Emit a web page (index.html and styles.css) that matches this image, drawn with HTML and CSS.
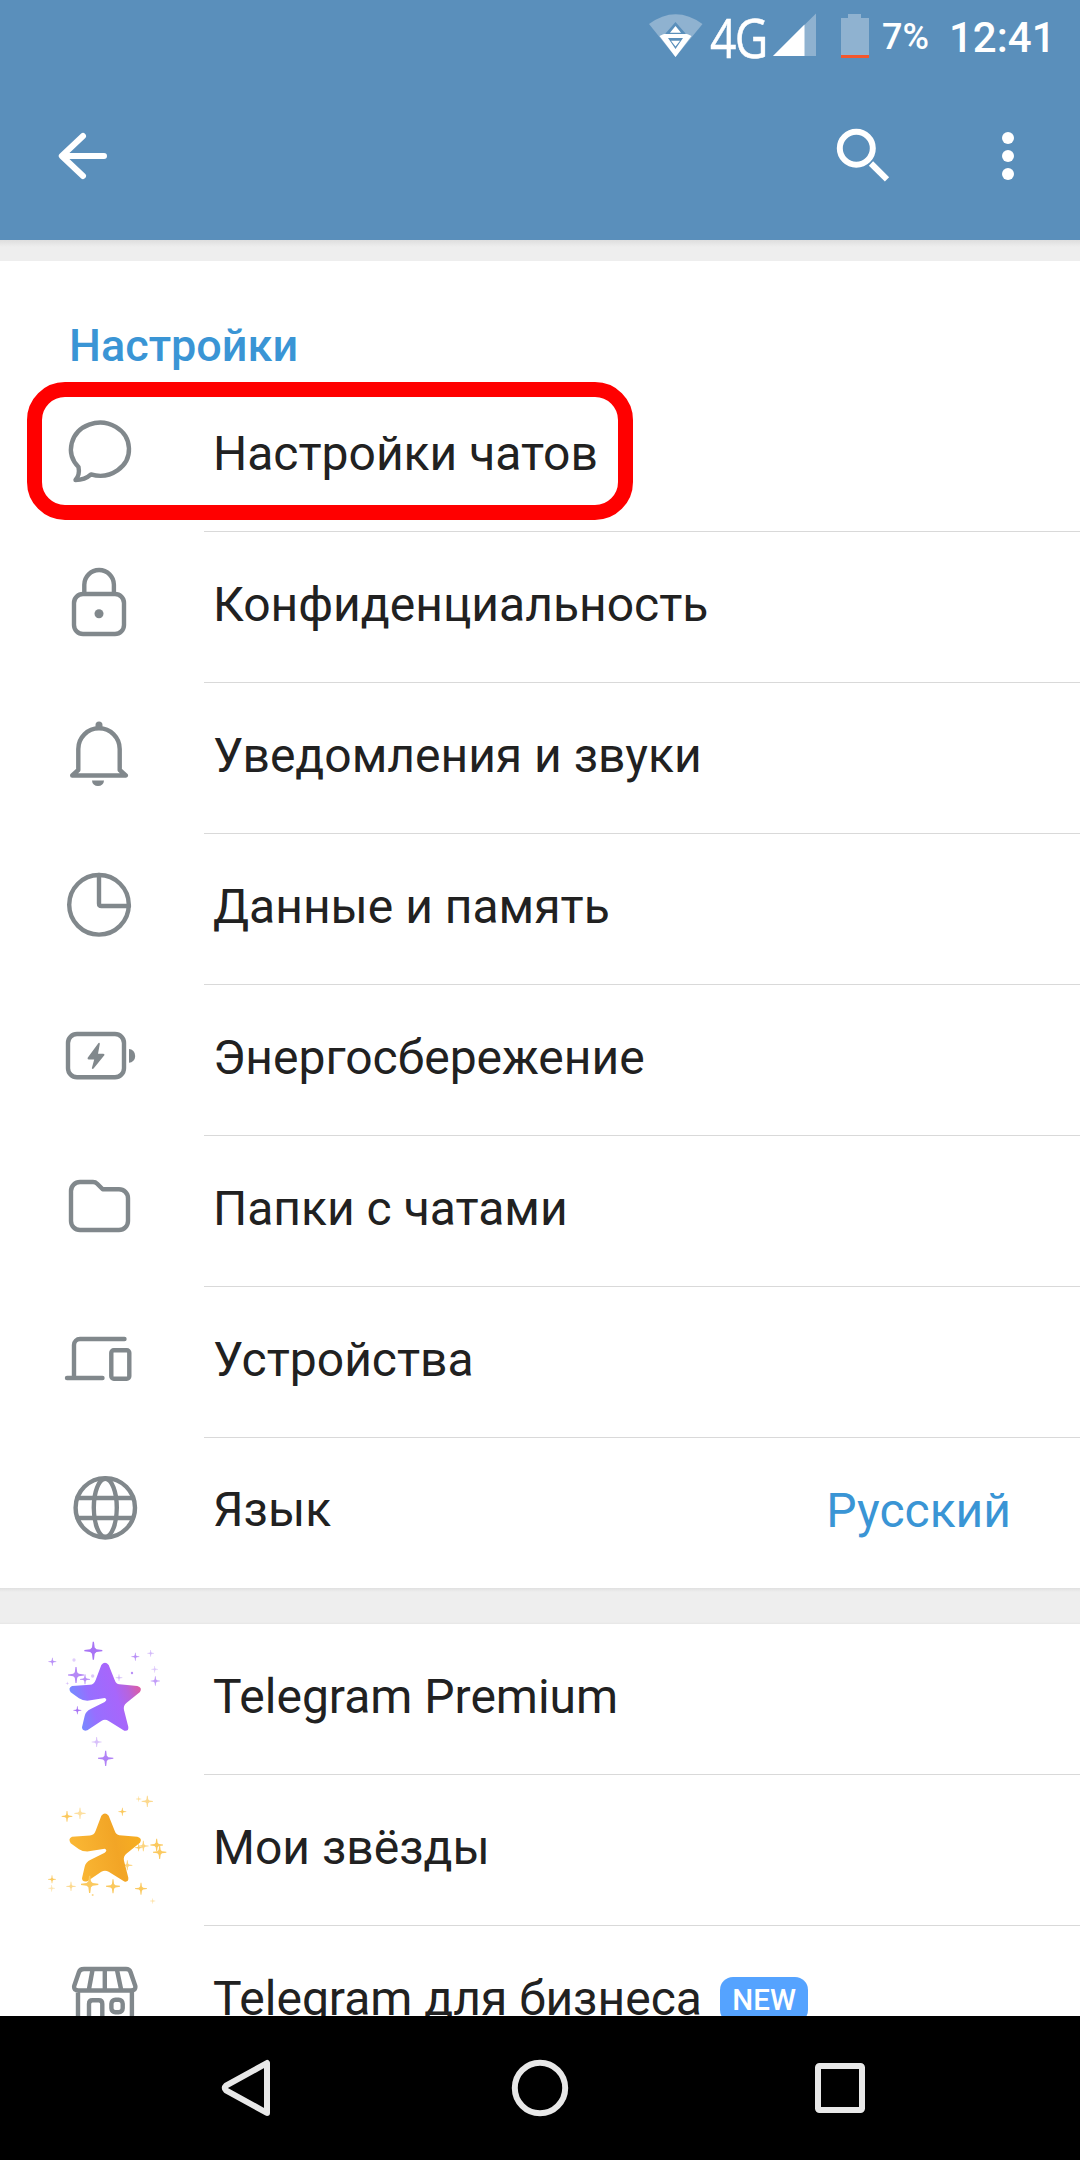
FILE: index.html
```html
<!DOCTYPE html>
<html lang="ru">
<head>
<meta charset="utf-8">
<title>Настройки</title>
<link rel="stylesheet" href="styles.css">
</head>
<body>
<svg class="defs" width="0" height="0">
  <defs>
    <linearGradient id="violet" x1="0" y1=".65" x2="1" y2=".35"><stop offset="0" stop-color="#6b93ff"/><stop offset=".3" stop-color="#976fff"/><stop offset=".65" stop-color="#a766fb"/><stop offset=".82" stop-color="#b863dc"/><stop offset="1" stop-color="#df5c9e"/></linearGradient>
    <linearGradient id="gold" x1="0" y1=".6" x2="1" y2=".4"><stop offset="0" stop-color="#fbb936"/><stop offset=".65" stop-color="#f2a526"/><stop offset="1" stop-color="#f7ae20"/></linearGradient>
    <path id="star" d="M214 135Q225 121 236 135L254 180Q259 193 268 193L322 198Q338 203 330 216L290 248Q279 257 282 270L295 321Q296 335 283 332L236 303Q225 296 214 303L172 331Q157 335 156 322L164 288Q167 274 182 267L224 246Q234 238 224 234L172 242Q157 242 147 235L122 217Q113 204 126 198L180 194Q192 194 197 180Z"/>
    <path id="spark" d="M-.7-10H.7L1.5-3.500L3.500-1.500L10-.7V.7L3.500 1.500L1.500 3.500L.7 10H-.7L-1.500 3.500L-3.500 1.500L-10 .7V-.7L-3.500-1.500L-1.500-3.500Z"/>
  </defs>
</svg>
<div class="screen">
  <header class="header">
    <div class="status">
      <svg class="wifi" viewBox="649 14 54 44" width="54" height="44"><path d="M649 24Q675.500 4.500 702.500 24L675.500 57Z" fill="#8fb2d0"/><path d="M659.500 36Q664 33 668 33.500H683Q687 33 691.500 36L675.500 57Z" fill="#fff"/><path d="M675.500 22L686 34H665ZM668 38H683L675.500 49Z" fill="#5a8fbb"/><path d="M675.500 26L681 32.700H670ZM671 40.700H680L675.500 46.500Z" fill="#fff"/></svg>
      <span class="network">4G</span>
      <svg class="signal" viewBox="773 13 43 44" width="43" height="44"><path d="M773 56L816 13.500V56Z" fill="#8fb2d0"/><path d="M773 56L804.500 24.500V56Z" fill="#fff"/></svg>
      <svg class="battery" viewBox="841 14 28 44" width="28" height="44"><path d="M841 18H848V14H861V18H869V55H841Z" fill="#8fb2d0"/><path d="M841 55H869V58H841Z" fill="#f4562c"/></svg>
      <span class="percent">7%</span>
      <span class="clock">12:41</span>
    </div>
    <nav class="toolbar">
      <svg class="back" viewBox="56 130 54 52" width="54" height="52"><path d="M104 156H62M83 136L61.800 156L83 176"/></svg>
      <svg class="search" viewBox="832 126 60 60" width="60" height="60"><circle cx="856.300" cy="148.300" r="16.500"/><path d="M871 163.500L887 179.300"/></svg>
      <svg class="more" viewBox="996 130 24 52" width="24" height="52"><circle cx="1008" cy="138" r="6"/><circle cx="1008" cy="156" r="6"/><circle cx="1008" cy="174" r="6"/></svg>
    </nav>
  </header>
  <main class="content">
    <section class="card">
      <h1 class="heading">Настройки</h1>
      <div class="row highlighted"><svg class="icon" viewBox="0 0 204 150"><path d="M78.500 86A29 26.500 0 1 1 91 93.400C86 98 81 99 75.500 99C79 95 79.500 91 78.500 86Z"/></svg><div class="body"><span class="label">Настройки чатов</span></div></div>
      <div class="row"><svg class="icon" viewBox="0 0 204 150"><rect x="74" y="62" width="50" height="40" rx="9"/><path d="M84.300 61V52.800a14.800 14.800 0 0 1 29.600 0V61"/><circle class="fill" cx="99" cy="81.700" r="4.500"/></svg><div class="body"><span class="label">Конфиденциальность</span></div></div>
      <div class="row"><svg class="icon" viewBox="0 0 204 150"><path d="M78.300 66a20.700 20.700 0 0 1 41.400 0V87L125.800 92.500H72.200L78.300 87Z"/><path class="fill" d="M95.500 45V42a3.500 3.500 0 0 1 7 0v3ZM92 97.500h12a6 5.500 0 0 1-12 0Z"/></svg><div class="body"><span class="label">Уведомления и звуки</span></div></div>
      <div class="row"><svg class="icon" viewBox="0 0 204 150"><circle cx="99" cy="70.800" r="29.800"/><path d="M99 41V69.500Q99 72 101.500 72H129"/></svg><div class="body"><span class="label">Данные и память</span></div></div>
      <div class="row"><svg class="icon" viewBox="0 0 204 150"><rect x="68" y="49" width="56" height="43.300" rx="9"/><path class="fill" d="M129 64a6.200 6.900 0 0 1 0 13.800ZM98.500 58L87.500 73Q87.500 74.500 89 74.500H94.200L91.800 83.300Q92.500 84.500 93.600 83.500L104.500 70Q104.500 68.700 103 68.700H98L99.800 59Q99.800 57.300 98.500 58Z"/></svg><div class="body"><span class="label">Энергосбережение</span></div></div>
      <div class="row"><svg class="icon" viewBox="0 0 204 150"><path d="M80 46H93Q95.500 46 97.200 47.700L102.700 53.200H119a9 9 0 0 1 9 9V85a9 9 0 0 1-9 9H80a9 9 0 0 1-9-9V55a9 9 0 0 1 9-9Z"/></svg><div class="body"><span class="label">Папки с чатами</span></div></div>
      <div class="row"><svg class="icon" viewBox="0 0 204 150"><path d="M67 91H102.500M74 91V58a6 6 0 0 1 6-6H124.500"/><rect x="111.300" y="63.300" width="18" height="28.400" rx="2.500"/></svg><div class="body"><span class="label">Устройства</span></div></div>
      <div class="row last"><svg class="icon" viewBox="0 0 204 150"><circle cx="105.300" cy="69.800" r="29.700"/><ellipse cx="105.300" cy="69.800" rx="11.500" ry="29"/><path d="M77.500 60H133M77.500 80H133"/></svg><div class="body"><span class="label">Язык</span><span class="value">Русский</span></div></div>
    </section>
    <div class="gap"></div>
    <section class="card">
      <div class="row"><svg class="icon" viewBox="0 0 204 150"><g class="sparks violet" transform="translate(30 -4) scale(.33333)"><use href="#star" class="star"/>
        <use href="#spark" transform="translate(190 92) scale(2.700)"/><use href="#spark" transform="translate(138 165) scale(2.400)" opacity=".85"/><use href="#spark" transform="translate(165 178) scale(1.500)" opacity=".8"/><use href="#spark" transform="translate(67 125) scale(1.200)" opacity=".8"/><use href="#spark" transform="translate(316 110) scale(1.200)" opacity=".8"/><use href="#spark" transform="translate(362 100)" opacity=".5"/><use href="#spark" transform="translate(374 148)" opacity=".4"/><use href="#spark" transform="translate(376 183) scale(1.400)" opacity=".7"/><use href="#spark" transform="translate(142 271) scale(1.200)"/><use href="#spark" transform="translate(200 366) scale(1.500)" opacity=".45"/><use href="#spark" transform="translate(227 415) scale(2.300)" opacity=".9"/><use href="#spark" transform="translate(267 173)" opacity=".5"/><use href="#spark" transform="translate(112 190) scale(.500)" opacity=".5"/><circle cx="132" cy="120" r="5" opacity=".35"/><circle cx="188" cy="168" r="5" opacity=".4"/><circle cx="306" cy="159" r="3.500" opacity=".8"/></g></svg><div class="body"><span class="label">Telegram Premium</span></div></div>
      <div class="row"><svg class="icon" viewBox="0 0 204 150"><g class="sparks gold" transform="translate(30 5) scale(.33333)">
        <use href="#spark" transform="translate(111 109) scale(1.600)"/><use href="#spark" transform="translate(150 100) scale(1.700)" opacity=".6"/><use href="#spark" transform="translate(277 95) scale(1.200)"/><use href="#spark" transform="translate(352 64) scale(1.700)" opacity=".7"/><use href="#spark" transform="translate(326 57) scale(.800)" opacity=".6"/><use href="#spark" transform="translate(380 195) scale(1.900)"/><use href="#spark" transform="translate(389 217) scale(2)"/><use href="#spark" transform="translate(340 198) scale(1.600)" opacity=".8"/><use href="#spark" transform="translate(326 203) scale(1.100)"/><use href="#spark" transform="translate(292 256) scale(1.500)" opacity=".8"/><use href="#spark" transform="translate(66 298) scale(1.200)"/><use href="#spark" transform="translate(65 325)" opacity=".5"/><use href="#spark" transform="translate(123 319) scale(1.400)" opacity=".7"/><use href="#star" class="star" y="-27.500"/><use href="#spark" transform="translate(179 313) scale(2.600)"/><use href="#spark" transform="translate(249 319) scale(2.100)"/><use href="#spark" transform="translate(333 326) scale(1.800)"/><use href="#spark" transform="translate(368 363) scale(.800)" opacity=".5"/><circle cx="188" cy="345" r="3" opacity=".7"/></g></svg><div class="body"><span class="label">Мои звёзды</span></div></div>
      <div class="row"><svg class="icon" viewBox="0 0 204 150"><path d="M84 43H126Q129.500 43 130.500 46L135.300 60Q136 64.500 131 64.500H78.500Q73.500 64.500 74.200 60L79 46Q80 43 84 43ZM92.500 44L89 63M104.800 44V63M117 44L121 63M78 65V110M131.900 65V110M89 110V78Q89 74.300 92.500 74.300H98.800Q102.300 74.300 102.300 78V110"/><rect x="111.400" y="73.700" width="11.300" height="12.600" rx="4"/></svg><div class="body"><span class="label">Telegram для бизнеса</span><span class="badge">NEW</span></div></div>
    </section>
  </main>
  <footer class="navbar">
    <svg viewBox="216 2056 60 64" width="60" height="64"><path d="M267 2063V2113L226 2090.300Q223.500 2088 226 2085.700Z"/></svg>
    <svg viewBox="508 2056 68 64" width="68" height="64"><circle cx="540" cy="2088" r="25.200"/></svg>
    <svg viewBox="808 2056 64 64" width="64" height="64"><rect x="818" y="2066" width="44" height="44" rx="1.500"/></svg>
  </footer>
</div>
</body>
</html>
```
FILE: styles.css
```css
* { box-sizing: border-box; }
body { margin: 0; background: #fff; font-family: Roboto, "Noto Sans", sans-serif; }
.defs { position: absolute; }
.screen { display: flex; flex-direction: column; width: 1080px; height: 2160px; overflow: hidden; }
svg { display: block; flex: none; }

.header { flex: none; height: 240px; background: #5a8fbb; color: #fff; }
.status { display: flex; height: 72px; padding-left: 649px; }
.status svg { margin-top: 14px; }
.status .signal { margin: 13px 0 0 5px; }
.status .battery { margin-left: 25px; }
.network { width: 58px; margin-left: 7px; font: 400 55px/73px "Open Sans", sans-serif; letter-spacing: -2px; -webkit-text-stroke: .5px #fff; transform: scaleX(.84); transform-origin: left; white-space: nowrap; }
.percent { width: 67px; margin-left: 13px; font-size: 36px; font-weight: 500; line-height: 75px; }
.clock { font-size: 42px; font-weight: 500; line-height: 75px; white-space: nowrap; }
.toolbar { display: flex; align-items: center; height: 168px; padding: 0 60px 0 56px; }
.toolbar svg { fill: none; stroke: #fff; stroke-width: 6; }
.toolbar .back { stroke-linecap: round; stroke-linejoin: round; }
.toolbar .search { margin-left: auto; }
.toolbar .more { margin-left: 104px; fill: #fff; stroke: none; }

.content { flex: 1; min-height: 0; overflow: hidden; padding-top: 21px; background: linear-gradient(#dedede, #eee 7px, #eee 100%); }
.card { background: #fff; }
.gap { height: 36px; background: linear-gradient(#e0e0e0, #eee 4px, #eee 34px, #e6e6e6); }
.heading { height: 120px; margin: 0; padding: 58px 0 0 69px; color: #3a95d5; font-size: 45px; font-weight: 500; line-height: 53px; }
.row { position: relative; display: flex; height: 151px; }
.icon { width: 204px; height: 150px; fill: none; stroke: #81888c; stroke-width: 4.400; stroke-linecap: round; stroke-linejoin: round; }
.icon .fill { fill: #81888c; stroke: none; }
.body { display: flex; flex: 1; align-items: center; padding: 0 69px 5px 9px; border-bottom: 1px solid #d9d9d9; color: #212121; font-size: 48px; }
.last { height: 150px; }
.last .body { border-bottom: 0; }
.last .label { margin-bottom: 2px; }
.value { margin-left: auto; color: #3a95d5; }
.badge { margin: 3px 0 0 18px; height: 46px; padding: 0 12.500px; border-radius: 13px; background: #55a3ff; color: #fff; font-size: 29.500px; font-weight: 500; line-height: 46px; }
.highlighted::after { content: ""; box-sizing: border-box; position: absolute; left: 27px; top: 1px; width: 606px; height: 138px; border: 15px solid #f00; border-radius: 38px; }
.icon .sparks { stroke: none; }
.violet { fill: #a874f5; }
.violet .star { fill: url(#violet); }
.gold { fill: #fbc95e; }
.gold .star { fill: url(#gold); }

.navbar { display: flex; flex: none; align-items: center; justify-content: space-between; height: 144px; padding: 0 208px 0 216px; background: #000; }
.navbar svg { fill: none; stroke: #e8e8e8; stroke-width: 6; stroke-linejoin: round; }
```
